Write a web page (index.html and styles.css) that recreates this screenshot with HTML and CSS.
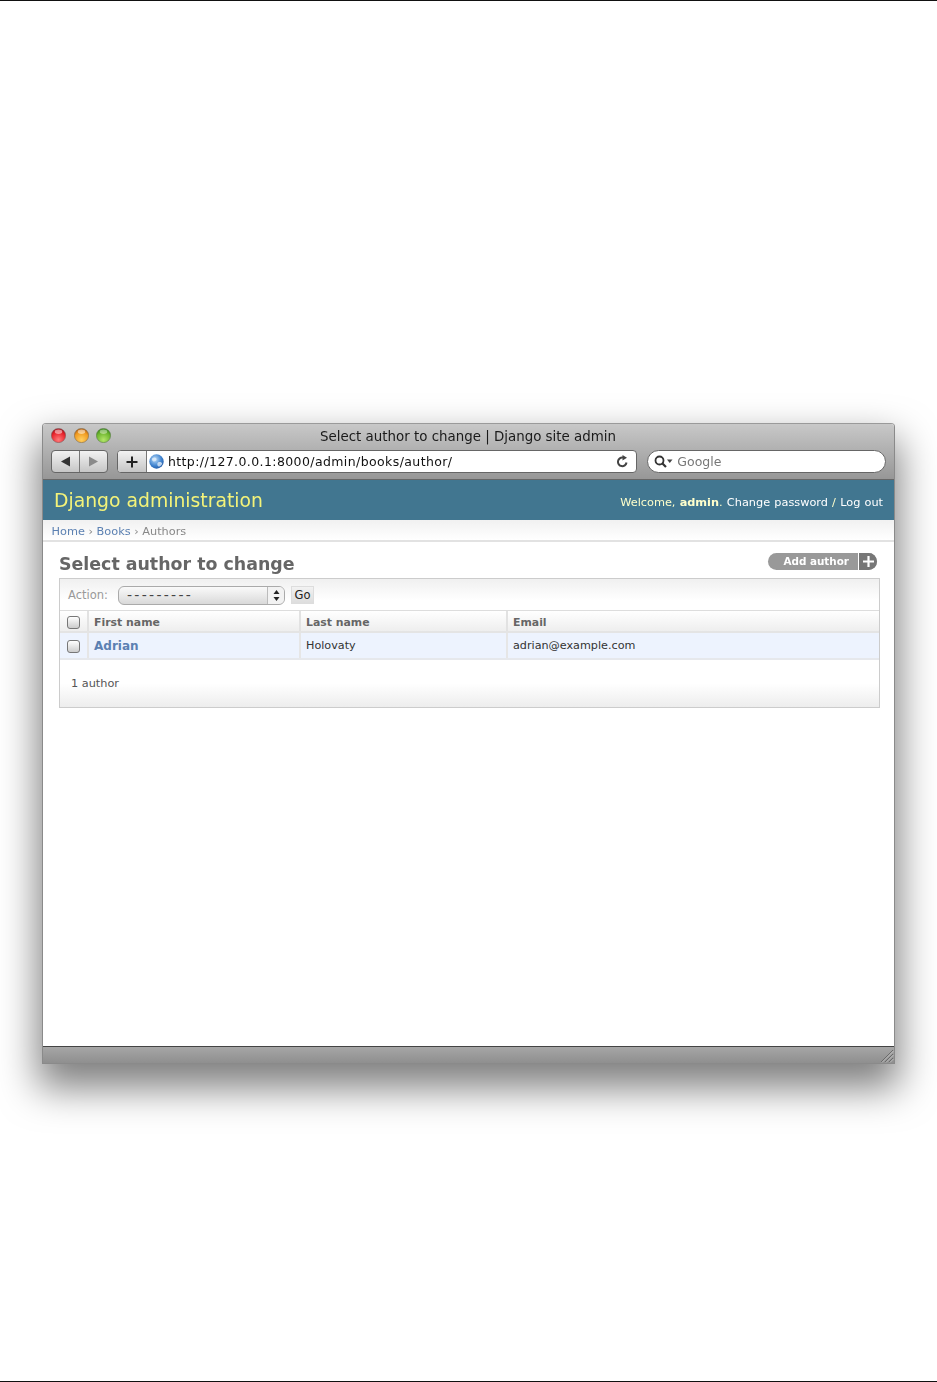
FILE: index.html
```html
<!DOCTYPE html>
<html lang="en">
<head>
<meta charset="utf-8">
<title>Select author to change | Django site admin</title>
<link rel="stylesheet" href="styles.css">
</head>
<body>
<div class="page">
  <div class="window">
    <div class="chrome">
      <div class="title-row">
        <div class="lights">
          <svg class="light" viewBox="0 0 16 16"><defs><radialGradient id="r" cx=".5" cy=".8" r=".75"><stop offset="0" stop-color="#ff7a7a"/><stop offset=".7" stop-color="#e8242c"/><stop offset="1" stop-color="#a80f18"/></radialGradient><radialGradient id="y" cx=".5" cy=".8" r=".75"><stop offset="0" stop-color="#ffd060"/><stop offset=".7" stop-color="#f09a20"/><stop offset="1" stop-color="#b8620f"/></radialGradient><radialGradient id="g" cx=".5" cy=".8" r=".75"><stop offset="0" stop-color="#b4e66a"/><stop offset=".7" stop-color="#6db52e"/><stop offset="1" stop-color="#3c8a1c"/></radialGradient></defs><circle cx="8" cy="8" r="7.6" fill="url(#r)" stroke="#7c5a5a" stroke-width=".6"/><ellipse cx="8" cy="4" rx="4" ry="2.300" fill="#fff" opacity=".5"/></svg>
          <svg class="light" viewBox="0 0 16 16"><circle cx="8" cy="8" r="7.6" fill="url(#y)" stroke="#7c6a4a" stroke-width=".6"/><ellipse cx="8" cy="4" rx="4" ry="2.300" fill="#fff" opacity=".5"/></svg>
          <svg class="light" viewBox="0 0 16 16"><circle cx="8" cy="8" r="7.6" fill="url(#g)" stroke="#5a7a4a" stroke-width=".6"/><ellipse cx="8" cy="4" rx="4" ry="2.300" fill="#fff" opacity=".4"/></svg>
        </div>
        <div class="win-title">Select author to change | Django site admin</div>
      </div>
      <div class="tool-row">
        <div class="nav-btns">
          <div class="nav-btn nav-back"><svg width="11" height="11" viewBox="0 0 11 11"><path d="M10 0.5V10.5L1 5.5Z" fill="#333"/></svg></div>
          <div class="nav-btn"><svg width="11" height="11" viewBox="0 0 11 11"><path d="M1 0.5V10.5L10 5.5Z" fill="#8a8a8a"/></svg></div>
        </div>
        <div class="url-group">
          <div class="plus-btn"><svg width="12" height="12" viewBox="0 0 12 12"><path d="M6 0.5V11.5M0.5 6H11.5" stroke="#222" stroke-width="2"/></svg></div>
          <div class="url-field">
            <svg class="globe" width="15" height="15" viewBox="0 0 15 15"><defs><radialGradient id="gl" cx=".4" cy=".35" r=".75"><stop offset="0" stop-color="#bcdcf8"/><stop offset=".6" stop-color="#3f83cf"/><stop offset="1" stop-color="#1b4f9a"/></radialGradient></defs><circle cx="7.5" cy="7.5" r="7.2" fill="url(#gl)"/><path d="M3 4.5C5 3 7 3.5 7.5 5S5.5 8 4.5 7.5 2.5 5.5 3 4.5ZM9 8.5c2-1 4 0 4.2 1S11 13 9.500 12.500 8 9 9 8.500Z" fill="#e8f1fb" opacity=".75"/></svg>
            <span class="url-text">http://127.0.0.1:8000/admin/books/author/</span>
            <svg class="reload" width="13" height="13" viewBox="0 0 13 13"><path d="M10.500 7.500A4.300 4.300 0 1 1 7 2.600" fill="none" stroke="#444" stroke-width="2"/><path d="M6.500 0L11 2.800L6.500 5.600Z" fill="#444"/></svg>
          </div>
        </div>
        <div class="search-field">
          <svg width="19" height="13" viewBox="0 0 19 13"><circle cx="5.500" cy="5.500" r="4" fill="none" stroke="#333" stroke-width="1.800"/><path d="M8.500 8.500L12 12" stroke="#333" stroke-width="2.200"/><path d="M13 4.500H18.500L15.750 8Z" fill="#444"/></svg>
          <span class="search-text">Google</span>
        </div>
      </div>
    </div>
    <header class="admin-head">
      <div class="brand">Django administration</div>
      <div class="user-tools">Welcome, <strong>admin</strong>. <a>Change password</a> / <a>Log out</a></div>
    </header>
    <nav class="crumbs"><a>Home</a> › <a>Books</a> › Authors</nav>
    <main class="content">
      <div class="content-head">
        <h1>Select author to change</h1>
        <a class="add-link"><span class="add-label">Add author</span><span class="add-icon"><svg width="11" height="11" viewBox="0 0 11 11"><path d="M5.500 0V11M0 5.500H11" stroke="#fff" stroke-width="2.200"/></svg></span></a>
      </div>
      <section class="module">
        <div class="actions">
          <label class="action-label">Action:</label>
          <div class="select">
            <span class="select-value">---------</span>
            <span class="select-arrows"><svg width="7" height="11" viewBox="0 0 7 11"><path d="M3.500 0L6.500 4H.5ZM3.500 11L.5 7H6.500Z" fill="#222"/></svg></span>
          </div>
          <div class="go">Go</div>
        </div>
        <div class="row head-row">
          <div class="cell check-cell"><span class="check"></span></div>
          <div class="cell col-first">First name</div>
          <div class="cell col-last">Last name</div>
          <div class="cell col-email">Email</div>
        </div>
        <div class="row data-row">
          <div class="cell check-cell"><span class="check"></span></div>
          <div class="cell col-first"><a class="author-link">Adrian</a></div>
          <div class="cell col-last">Holovaty</div>
          <div class="cell col-email">adrian@example.com</div>
        </div>
        <div class="paginator">1 author</div>
      </section>
    </main>
    <div class="statusbar">
      <svg class="grip" width="14" height="14" viewBox="0 0 14 14"><path d="M1 13L13 1M5 13L13 5M9 13L13 9" stroke="#6a6a6a" stroke-width="1"/><path d="M2 13.500L13.500 2M6 13.500L13.500 6M10 13.500L13.500 10" stroke="#c4c4c4" stroke-width=".8"/></svg>
    </div>
  </div>
</div>
</body>
</html>
```

FILE: styles.css
```css
* { box-sizing: border-box; }
html, body { margin: 0; padding: 0; background: #fff; }
body { font-family: "DejaVu Sans", sans-serif; color: #333; }
a { text-decoration: none; }

.page {
  height: 1382px;
  border-top: 1px solid #111;
  border-bottom: 1px solid #111;
  padding: 422px 42px 0 42px;
  overflow: hidden;
}

.window {
  width: 853px;
  height: 641px;
  display: flex;
  flex-direction: column;
  background: #fff;
  border: 1px solid #8a8a8a;
  border-top-color: #9a9a9a;
  border-radius: 4px 4px 0 0;
  box-shadow: 0 20px 38px 4px rgba(0, 0, 0, .5);
  filter: blur(.45px);
}

.chrome {
  height: 56px;
  flex: none;
  background: linear-gradient(#c8c8c8, #b4b4b4 40%, #979797);
  border-bottom: 1px solid #666;
  border-radius: 3px 3px 0 0;
}

.title-row { height: 23px; display: flex; align-items: center; padding-left: 8px; }
.lights { display: flex; gap: 7.5px; }
.light { width: 15px; height: 15px; display: block; }
.win-title {
  flex: 1;
  text-align: center;
  font-size: 13.4px;
  color: #1a1a1a;
  margin-left: -69px;
  padding-top: 1px;
}

.tool-row { display: flex; align-items: center; padding: 3px 8px 0 8px; }
.nav-btns { display: flex; width: 57px; height: 23px; border: 1px solid #666; border-radius: 4px; background: linear-gradient(#f2f2f2, #c6c6c6); }
.nav-btn { flex: 1; display: flex; align-items: center; justify-content: center; }
.nav-back { border-right: 1px solid #777; }

.url-group { display: flex; width: 521px; height: 23px; margin-left: 9px; border: 1px solid #666; border-radius: 4px; overflow: hidden; background: #fff; }
.plus-btn { width: 29px; flex: none; display: flex; align-items: center; justify-content: center; background: linear-gradient(#f2f2f2, #c6c6c6); border-right: 1px solid #777; }
.url-field { flex: 1; display: flex; align-items: center; padding: 0 7px 0 2px; }
.globe { flex: none; }
.url-text { flex: 1; font-size: 12.5px; margin-left: 4px; color: #111; white-space: nowrap; letter-spacing: .4px; }
.reload { flex: none; }

.search-field { display: flex; align-items: center; width: 239px; height: 23px; margin-left: 10px; padding-left: 6px; border: 1px solid #666; border-radius: 12px; background: #fff; }
.search-text { font-size: 12.5px; color: #777; margin-left: 4px; }

.admin-head {
  height: 40px;
  flex: none;
  background: #417690;
  display: flex;
  align-items: center;
  justify-content: space-between;
  padding: 0 11px;
}
.brand { font-size: 18.8px; color: #f4f379; }
.user-tools { font-size: 11.3px; word-spacing: .6px; color: #ffc; padding-top: 4px; }
.user-tools strong { font-weight: 700; }
.user-tools a { color: #fff; }

.crumbs {
  height: 22px;
  flex: none;
  padding: 5px 8.5px 0;
  font-size: 11.3px;
  color: #888;
  background: linear-gradient(#f1f1f1, #fff);
  border-bottom: 2px solid #e2e2e2;
}
.crumbs a { color: #5b80b2; }

.content { flex: 1; padding: 0 14px 0 16px; }
.content-head { display: flex; justify-content: space-between; height: 36px; align-items: flex-start; }
h1 { margin: 9px 0 0; font-size: 17.4px; line-height: 26px; font-weight: 700; color: #666; }
.add-link { display: flex; width: 109px; height: 17px; margin: 11px 3px 0 0; border-radius: 9px; overflow: hidden; background: #999; color: #fff; font-size: 10.4px; font-weight: 700; }
.add-label { flex: 1; text-align: right; padding-right: 9px; line-height: 17px; border-right: 1px solid #fff; }
.add-icon { width: 18px; flex: none; background: #777; display: flex; align-items: center; justify-content: center; }

.module { border: 1px solid #ccc; height: 130px; display: flex; flex-direction: column; }
.actions { height: 32px; flex: none; display: flex; align-items: center; padding: 2px 0 0 8px; background: linear-gradient(#f0f0f0, #fff 70%); border-bottom: 1px solid #ddd; }
.action-label { font-size: 11.500px; color: #999; width: 50px; margin-top: -2px; }
.select { width: 167px; height: 19px; display: flex; border: 1px solid #aaa; border-radius: 6px; background: linear-gradient(#fafafa, #d9d9d9); }
.select-value { flex: 1; font-size: 14px; line-height: 17px; padding-left: 8px; color: #444; letter-spacing: 2.3px; }
.select-arrows { width: 17px; flex: none; border-left: 1px solid #bbb; background: #f2f2f2; border-radius: 0 5px 5px 0; display: flex; align-items: center; justify-content: center; }
.go { width: 23px; height: 18px; margin: -2px 0 0 6px; border: 1px solid #ddd; background: linear-gradient(#f2f2f2, #ddd); font-size: 11.500px; line-height: 17px; text-align: center; color: #222; }

.row { display: flex; flex: none; }
.cell { display: flex; align-items: center; border-right: 2px solid #e6e6e6; font-size: 11.2px; }
.head-row { height: 22px; background: linear-gradient(#fff, #eee); border-bottom: 2px solid #e4e4e4; font-weight: 700; }
.head-row .cell { font-size: 10.9px; color: #666; border-right-color: #e2e2e2; padding-top: 2px; }
.data-row { height: 27px; background: #edf3fe; border-bottom: 2px solid #e6e8ec; color: #333; }
.check-cell { width: 29px; justify-content: center; padding-left: 0; }
.col-first { width: 212px; padding-left: 5px; }
.col-last { width: 207px; padding-left: 5px; }
.col-email { flex: 1; padding-left: 5px; border-right: 0; }
.check { width: 13px; height: 13px; margin-top: 1px; border: 1px solid #777; border-radius: 3px; background: linear-gradient(#fff, #ccc); }
.author-link { font-size: 12px; font-weight: 700; color: #5b80b2; }
.paginator { flex: 1; font-size: 11.3px; color: #555; padding: 17px 11px 0; background: linear-gradient(#fff 50%, #ededed); }

.statusbar {
  height: 17px;
  flex: none;
  display: flex;
  justify-content: flex-end;
  align-items: flex-end;
  background: linear-gradient(#a6a6a6, #8f8f8f);
  border-top: 1px solid #444;
}
.grip { display: block; }
```
